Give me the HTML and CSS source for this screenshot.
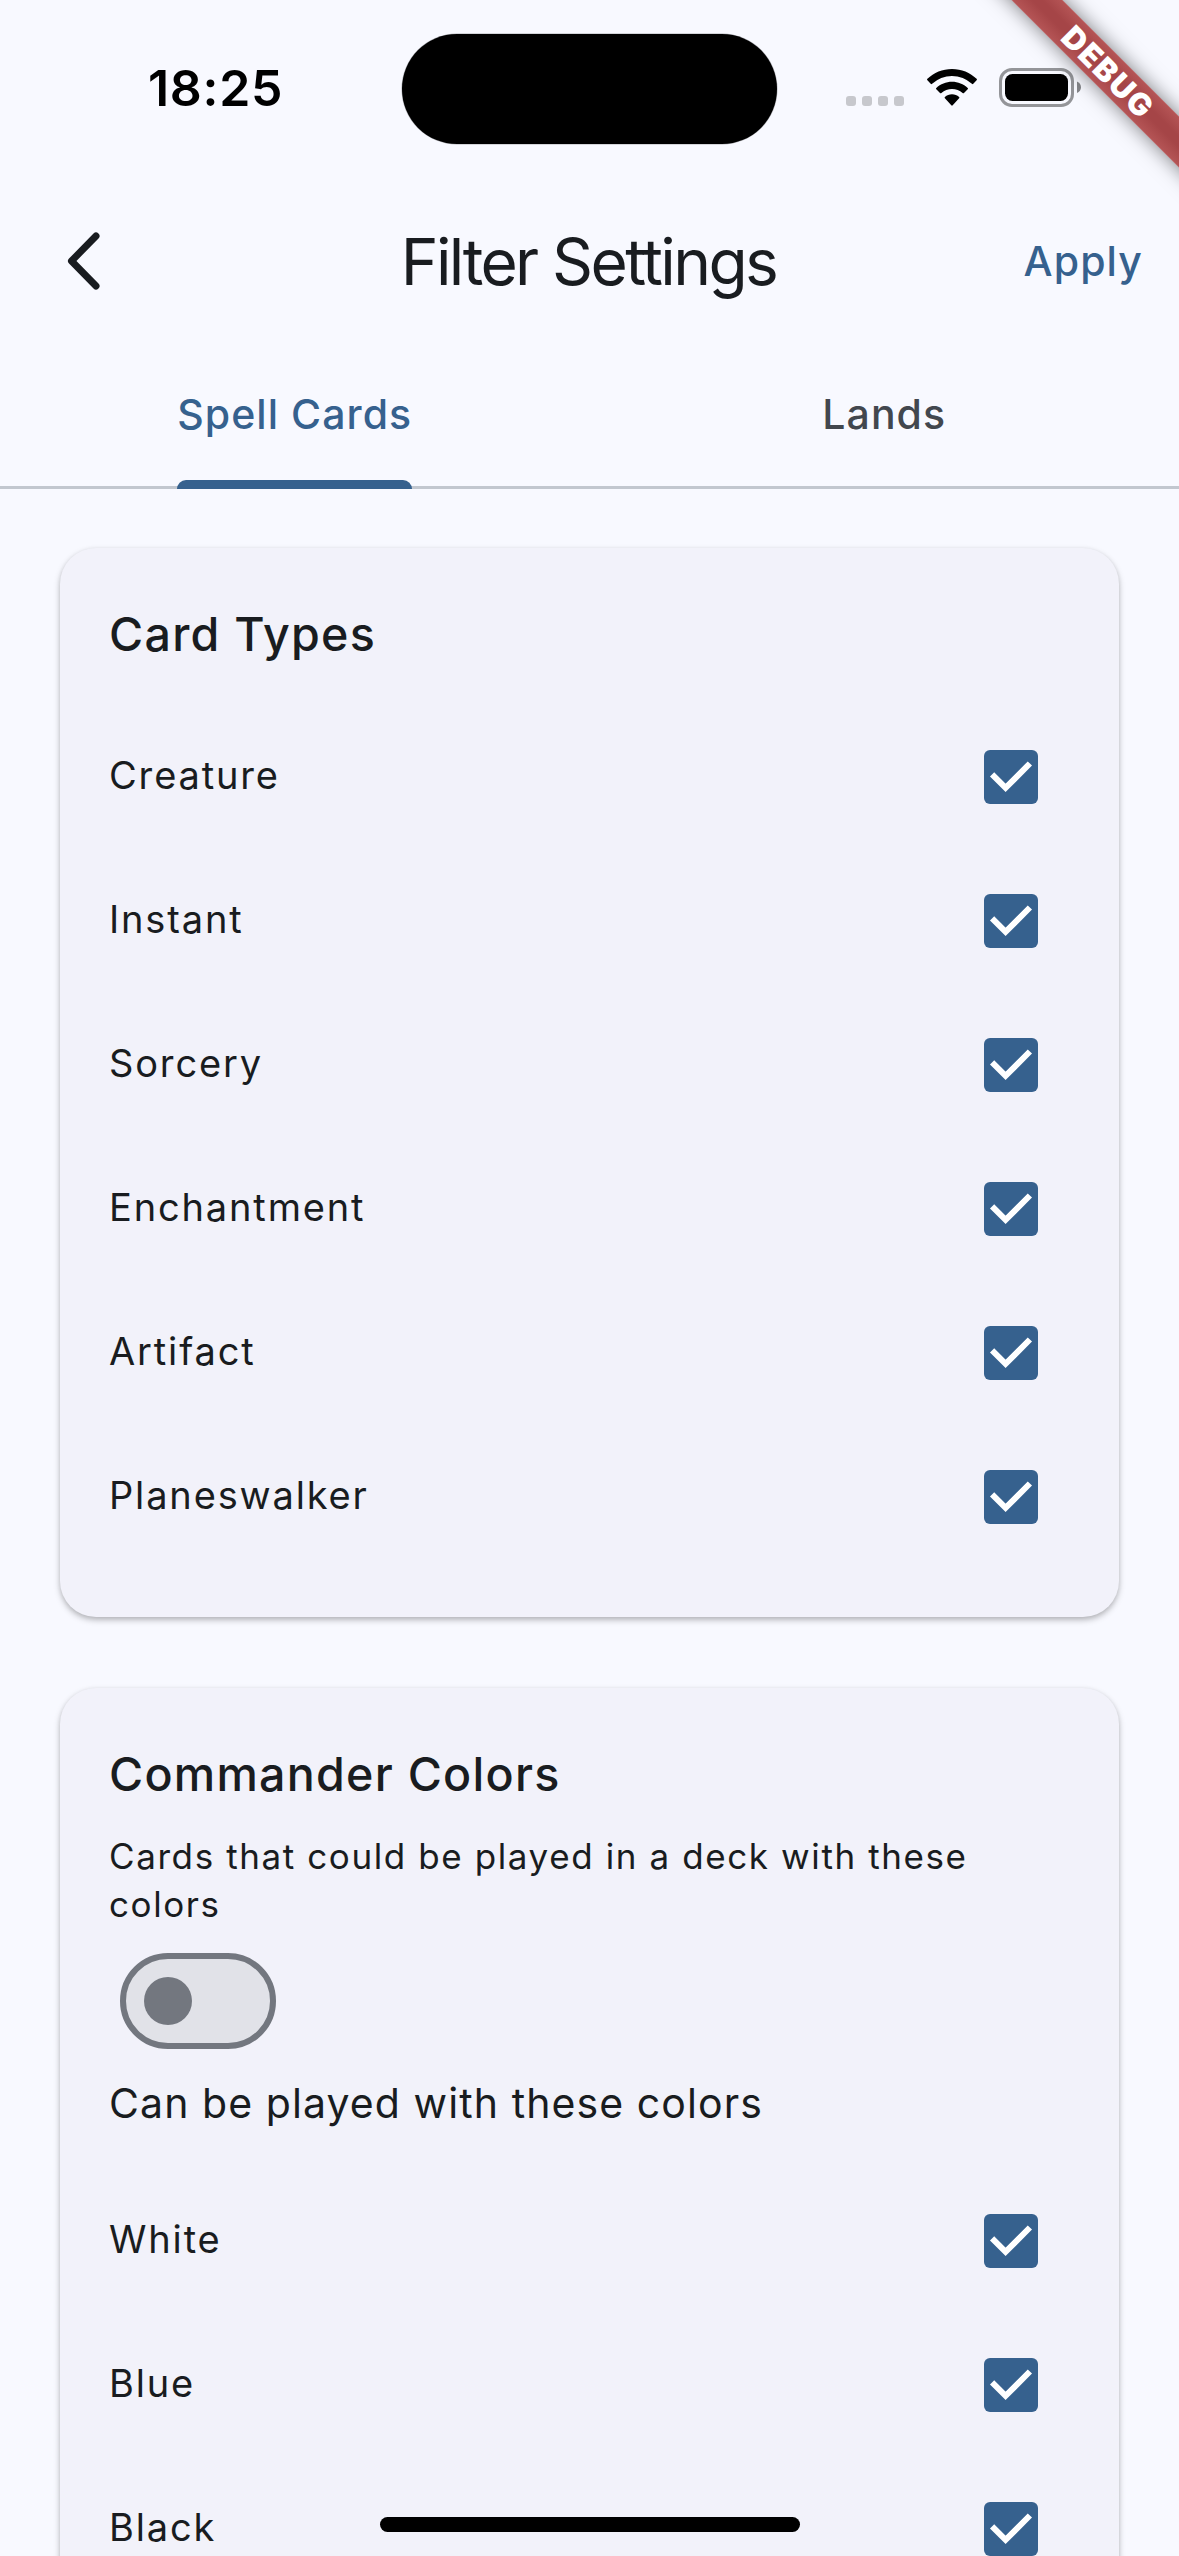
FILE: index.html
```html
<!DOCTYPE html>
<html lang="en">
<head>
<meta charset="utf-8">
<title>Filter Settings</title>
<link rel="stylesheet" href="styles.css">
</head>
<body>
<svg class="defs" aria-hidden="true"><symbol id="check" viewBox="0 0 54 54"><path d="M8.1 24.3 21.6 37.8 45.9 13.5" fill="none" stroke="#fff" stroke-width="6"/></symbol></svg>
<div class="screen">
  <header class="status">
    <div class="clock"><span>18:25</span></div>
    <div class="island"></div>
    <div class="indicators">
      <div class="dots"><i></i><i></i><i></i><i></i></div>
      <svg class="wifi" width="50" height="37" viewBox="0 0 50 37"><path d="M25 0C34.500 0 43.200 3.700 49.600 9.800Q50.300 10.500 49.600 11.200L46.300 14.800Q45.600 15.500 44.900 14.800A29 29 0 0 0 5.100 14.800Q4.400 15.500 3.700 14.800L.4 11.200Q-.3 10.500.4 9.800C6.800 3.700 15.500 0 25 0Z"/><path d="M25 12.800C31 12.800 36.500 15.100 40.700 18.900Q41.400 19.600 40.700 20.300L37 24Q36.300 24.600 35.600 24A16 16 0 0 0 14.400 24Q13.700 24.600 13 24L9.300 20.300Q8.600 19.600 9.300 18.900C13.500 15.100 19 12.800 25 12.800Z"/><path d="M25 25.300C27.700 25.300 30.200 26.300 32.100 27.900Q32.800 28.600 32.100 29.300L25.700 36.300Q25 37 24.300 36.300L17.900 29.300Q17.200 28.600 17.900 27.900C19.800 26.300 22.300 25.300 25 25.300Z"/></svg>
      <svg class="battery" width="82" height="39" viewBox="0 0 82 39"><rect x="1.500" y="1.500" width="72" height="36" rx="11.500" fill="none" stroke="#949599" stroke-width="3"/><rect x="6" y="6" width="63" height="27" rx="7.500"/><path d="M78 13.500C80.500 14.500 82 16.800 82 19.300S80.500 24 78 25Z" fill="#85868a"/></svg>
    </div>
  </header>
  <nav class="appbar">
    <svg class="back" width="34" height="58" viewBox="0 0 34 58"><path d="M29 4 4.500 29 29 54" fill="none" stroke="#191c20" stroke-width="7" stroke-linecap="round" stroke-linejoin="round"/></svg>
    <h1>Filter Settings</h1>
    <span class="apply">Apply</span>
  </nav>
  <div class="tabs">
    <div class="tab active"><span>Spell Cards</span></div>
    <div class="tab"><span>Lands</span></div>
  </div>
  <main class="content">
    <section class="card">
      <h2>Card Types</h2>
      <ul class="options first">
        <li><span>Creature</span><svg class="box"><use href="#check"/></svg></li>
        <li><span>Instant</span><svg class="box"><use href="#check"/></svg></li>
        <li><span>Sorcery</span><svg class="box"><use href="#check"/></svg></li>
        <li><span>Enchantment</span><svg class="box"><use href="#check"/></svg></li>
        <li><span>Artifact</span><svg class="box"><use href="#check"/></svg></li>
        <li><span>Planeswalker</span><svg class="box"><use href="#check"/></svg></li>
      </ul>
    </section>
    <section class="card">
      <h2>Commander Colors</h2>
      <p class="hint">Cards that could be played in a deck with these<br>colors</p>
      <div class="switch"><i></i></div>
      <p class="mode">Can be played with these colors</p>
      <ul class="options">
        <li><span>White</span><svg class="box"><use href="#check"/></svg></li>
        <li><span>Blue</span><svg class="box"><use href="#check"/></svg></li>
        <li><span>Black</span><svg class="box"><use href="#check"/></svg></li>
      </ul>
    </section>
  </main>
  <div class="home"></div>
  <div class="debug"><span>DEBUG</span></div>
</div>
</body>
</html>
```

FILE: styles.css
```css
* { box-sizing: border-box; margin: 0; padding: 0; }
body { font-family: Inter, "Liberation Sans", sans-serif; color: #191c20; background: #f8f9ff; overflow: hidden; }
.defs { position: absolute; width: 0; height: 0; }
.screen { position: relative; width: 1179px; height: 2556px; overflow: hidden; background: #f8f9ff; display: flex; flex-direction: column; }
span, h1, h2, p { white-space: nowrap; }

.status { height: 177px; flex: none; display: grid; grid-template-columns: 402px 375px 402px; color: #000; }
.clock { padding: 58px 0 0 148px; font-size: 50px; line-height: 60px; font-weight: 600; letter-spacing: 0.7px; }
.island { height: 110px; margin-top: 34px; border-radius: 55px; background: #000; box-shadow: 0 0 0 0.5px rgba(0,0,0,.3); }
.indicators { display: flex; align-items: flex-start; padding-left: 69px; }
.dots { display: flex; gap: 6px; margin-top: 96px; }
.dots i { width: 10px; height: 10px; border-radius: 3px; background: #c7c8cd; }
.wifi { margin: 69px 0 0 23px; }
.battery { margin: 68px 0 0 22px; }

.appbar { height: 168px; flex: none; display: grid; grid-template-columns: 300px 1fr 300px; align-items: center; }
.back { margin-left: 67px; }
h1 { padding: 2px 2px 0 0; font-size: 64px; line-height: 84px; font-weight: 400; letter-spacing: -2.6px; text-align: center; }
.apply { justify-self: end; margin-right: 36px; font-size: 41px; line-height: 60px; font-weight: 450; letter-spacing: 1.1px; color: #36618e; }

.tabs { height: 144px; flex: none; display: grid; grid-template-columns: 1fr 1fr; justify-items: center; border-bottom: 3px solid #c2c7cf; }
.tab { height: 144px; padding-top: 39px; font-size: 41px; line-height: 60px; font-weight: 450; letter-spacing: 1.05px; color: #42474e; }
.tab.active { color: #36618e; display: flex; flex-direction: column; justify-content: space-between; }
.tab.active::after { content: ""; height: 9px; border-radius: 9px 9px 0 0; background: #36618e; }

.content { padding: 59px 60px 0; display: flex; flex-direction: column; gap: 71px; }
.card { flex: none; height: 1069px; padding: 50px 49px 0; border-radius: 36px; background: #f2f2fa; box-shadow: 0 3px 6px rgba(0,0,0,.26), 0 1px 4px rgba(0,0,0,.06); }
h2 { font-size: 46.6px; line-height: 72px; font-weight: 500; letter-spacing: 1.25px; }
ul { list-style: none; }
.options.first { margin-top: 35px; }
.options li { height: 144px; display: flex; align-items: center; justify-content: space-between; padding-right: 32px; font-size: 38px; font-weight: 370; letter-spacing: 1.85px; }
.options li span { padding-bottom: 5px; }
.box { width: 54px; height: 54px; border-radius: 6px; background: #36618e; }
.hint { margin-top: 22px; font-size: 35px; line-height: 48px; font-weight: 380; letter-spacing: 1.6px; }
.switch { width: 156px; height: 96px; margin: 25px 0 0 11px; border: 6px solid #73777f; border-radius: 48px; background: #e1e2e8; padding: 18px; }
.switch i { display: block; width: 48px; height: 48px; border-radius: 50%; background: #73777f; }
.mode { margin-top: 18px; font-size: 41px; line-height: 72px; font-weight: 380; letter-spacing: 1.08px; }
.mode + .options { margin-top: 30px; }

.home { position: absolute; left: 380px; top: 2517px; width: 420px; height: 15px; border-radius: 7.5px; background: #000; }
.debug { position: absolute; left: 948px; top: 53px; width: 320px; height: 36px; transform: rotate(45deg); background: linear-gradient(#b55556, #a54547 40%, #a54547 60%, #b55556); box-shadow: 0 0 20px rgba(0,0,0,.5); display: flex; align-items: center; justify-content: center; }
.debug span { padding-left: 2px; color: #fff; font-size: 31px; font-weight: 900; letter-spacing: 1.6px; }
```
